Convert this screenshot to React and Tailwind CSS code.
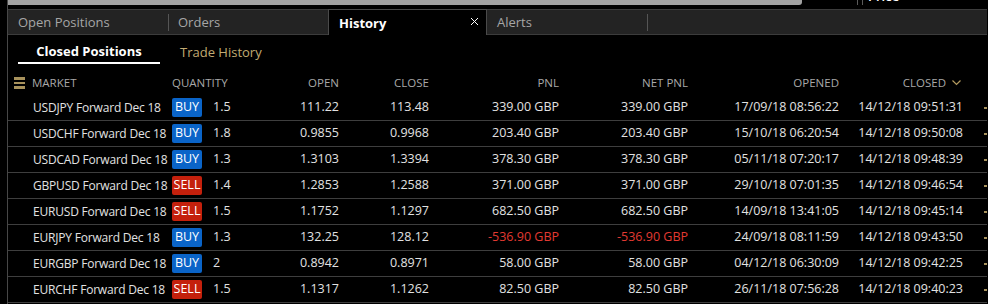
const rows = [
  { market: 'USDJPY Forward Dec 18', side: 'BUY', qty: '1.5', open: '111.22', close: '113.48', pnl: '339.00 GBP', net: '339.00 GBP', opened: '17/09/18 08:56:22', closed: '14/12/18 09:51:31' },
  { market: 'USDCHF Forward Dec 18', side: 'BUY', qty: '1.8', open: '0.9855', close: '0.9968', pnl: '203.40 GBP', net: '203.40 GBP', opened: '15/10/18 06:20:54', closed: '14/12/18 09:50:08' },
  { market: 'USDCAD Forward Dec 18', side: 'BUY', qty: '1.3', open: '1.3103', close: '1.3394', pnl: '378.30 GBP', net: '378.30 GBP', opened: '05/11/18 07:20:17', closed: '14/12/18 09:48:39' },
  { market: 'GBPUSD Forward Dec 18', side: 'SELL', qty: '1.4', open: '1.2853', close: '1.2588', pnl: '371.00 GBP', net: '371.00 GBP', opened: '29/10/18 07:01:35', closed: '14/12/18 09:46:54' },
  { market: 'EURUSD Forward Dec 18', side: 'SELL', qty: '1.5', open: '1.1752', close: '1.1297', pnl: '682.50 GBP', net: '682.50 GBP', opened: '14/09/18 13:41:05', closed: '14/12/18 09:45:14' },
  { market: 'EURJPY Forward Dec 18', side: 'BUY', qty: '1.3', open: '132.25', close: '128.12', pnl: '-536.90 GBP', net: '-536.90 GBP', opened: '24/09/18 08:11:59', closed: '14/12/18 09:43:50', loss: true },
  { market: 'EURGBP Forward Dec 18', side: 'BUY', qty: '2', open: '0.8942', close: '0.8971', pnl: '58.00 GBP', net: '58.00 GBP', opened: '04/12/18 06:30:09', closed: '14/12/18 09:42:25' },
  { market: 'EURCHF Forward Dec 18', side: 'SELL', qty: '1.5', open: '1.1317', close: '1.1262', pnl: '82.50 GBP', net: '82.50 GBP', opened: '26/11/18 07:56:28', closed: '14/12/18 09:40:23' },
];

const SIDE_STYLES = {
  BUY: 'bg-[#0a64c8]',
  SELL: 'bg-[#c4200c]',
};

const App = () => {
  return (
    <div className="w-[988px] h-[304px] bg-black overflow-hidden text-[#e4e4e4]" style={{ fontFamily: '"Open Sans", "Noto Sans", sans-serif' }}>
      {/* Top strip (window above, cut off) */}
      <div className="flex h-[9px]">
        <div className="w-[7px]" />
        <div className="w-px bg-[#4a4a4a]" />
        <div className="w-[794px] h-[5px] bg-[#a2a2a2] rounded-br-[3px]" />
        <div className="w-[55px]" />
        <div className="w-px h-[5px] bg-[#5a5a5a]" />
        <div className="w-[4px]" />
        <div className="flex-1 h-[5px] border-l border-[#5a5a5a] overflow-hidden">
          <div className="mt-[-11px] ml-[5px] text-[13px] font-semibold text-white leading-[14px]">Price</div>
        </div>
      </div>

      <div className="flex h-[295px]">
        <div className="w-[7px]" />
        <div className="w-[980px] border-l border-[#474747] flex flex-col">
          {/* Main tabs */}
          <div className="flex h-[26px] shrink-0 bg-[#232323] border-y border-[#3c3c3c] text-[13px] text-[#a6a6a6]">
            <div className="w-[160px] flex items-center pl-[10px] pt-[2px]">Open Positions</div>
            <div className="w-px h-[17px] bg-[#555] self-center" />
            <div className="w-[159px] flex items-center pl-[9px] pt-[2px]">Orders</div>
            <div className="w-[159px] flex items-center justify-between pl-[10px] pr-[7px] pt-[2px] bg-black border-x border-t border-[#4a4a4a] mt-[-1px] mb-[-1px] text-white font-bold">
              <span>History</span>
              <svg width="9" height="9" viewBox="0 0 9 9" className="text-white mb-[4px]">
                <path d="M1 1L8 8M8 1L1 8" stroke="currentColor" strokeWidth="1" />
              </svg>
            </div>
            <div className="w-[160px] flex items-center pl-[10px] pt-[2px]">Alerts</div>
            <div className="w-px h-[17px] bg-[#555] self-center" />
            <div className="flex-1" />
          </div>

          {/* Sub tabs */}
          <div className="flex h-[36px] shrink-0 items-stretch text-[13px]">
            <div className="ml-[10px] w-[142px] flex items-center justify-center font-bold text-white border-b-2 border-white mb-[7px] pt-[6px]">
              Closed Positions
            </div>
            <div className="ml-[20px] flex items-center text-[#c2ab72] mb-[7px] pt-[6px]">Trade History</div>
          </div>

          {/* Header */}
          <div className="flex h-[24px] shrink-0 items-center text-[11.5px] text-[#a8a8a8]">
            <div className="w-[164px] flex items-center pl-[6px] gap-[7px]">
              <div className="w-[11px] flex flex-col gap-[2px]">
                <div className="h-[2.5px] bg-[#a8925c]" />
                <div className="h-[2.5px] bg-[#a8925c]" />
                <div className="h-[2.5px] bg-[#a8925c]" />
              </div>
              <span>MARKET</span>
            </div>
            <div className="w-[60px] whitespace-nowrap">QUANTITY</div>
            <div className="w-[107px] text-right">OPEN</div>
            <div className="w-[90px] text-right">CLOSE</div>
            <div className="w-[130px] text-right">PNL</div>
            <div className="w-[129px] text-right">NET PNL</div>
            <div className="w-[151px] text-right">OPENED</div>
            <div className="w-[122px] flex items-center justify-end gap-[6px]">
              <span>CLOSED</span>
              <svg width="9" height="6" viewBox="0 0 9 6">
                <path d="M0.5 0.5L4.5 4.5L8.5 0.5" fill="none" stroke="#b39a5e" strokeWidth="1.2" />
              </svg>
            </div>
          </div>

          {/* Rows */}
          {rows.map((r) => (
            <div key={r.market} className="flex h-[26px] shrink-0 items-center border-b border-[#3e3e3e] text-[12.5px] text-[#e2e2e2]">
              <div className="w-[164px] pl-[25px] whitespace-nowrap text-[12px] tracking-[-0.2px]">{r.market}</div>
              <div className="w-[60px] flex items-center gap-[11px]">
                <span className={`w-[30px] h-[19px] rounded-[2px] flex items-center justify-center text-white text-[12.5px] ${SIDE_STYLES[r.side]}`}>
                  {r.side}
                </span>
                <span>{r.qty}</span>
              </div>
              <div className="w-[107px] text-right">{r.open}</div>
              <div className="w-[90px] text-right">{r.close}</div>
              <div className={`w-[130px] text-right ${r.loss ? 'text-[#e23a32]' : ''}`}>{r.pnl}</div>
              <div className={`w-[129px] text-right ${r.loss ? 'text-[#e23a32]' : ''}`}>{r.net}</div>
              <div className="w-[151px] text-right">{r.opened}</div>
              <div className="w-[124px] text-right">{r.closed}</div>
              <div className="ml-auto w-[3px] h-[2px] bg-[#a8925c]" />
            </div>
          ))}
        </div>
      </div>
    </div>
  );
};

export default App;
